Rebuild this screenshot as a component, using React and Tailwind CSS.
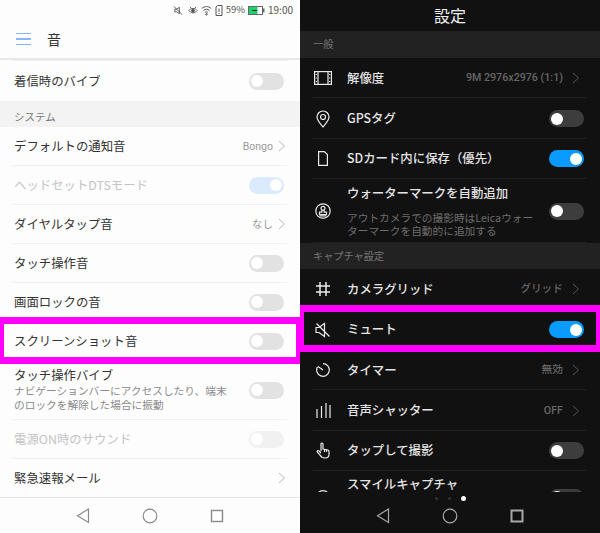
import React from "react";

const jp = { fontFamily: '"Noto Sans CJK JP", "Noto Sans", sans-serif' };

const Toggle = ({ on, dark, faded }) => {
  let track = dark ? "bg-[#3d3d3d]" : "bg-[#e2e2e2]";
  if (on) track = "bg-[#0a9bff]";
  if (faded) track = on ? "bg-[#dbeafd]" : "bg-[#f1f1f1]";
  return (
    <div
      className={`w-[35px] h-[17px] rounded-full flex items-center px-[1px] shrink-0 ${track} ${
        on ? "justify-end" : "justify-start"
      }`}
    >
      <div className="w-[12px] h-[12px] mx-[1px] rounded-full bg-white" />
    </div>
  );
};

const Chevron = ({ color, className }) => (
  <svg width="8" height="12" viewBox="0 0 8 12" className={`shrink-0 ${className}`}>
    <path d="M1 1l5.5 5L1 11" fill="none" stroke={color} strokeWidth="1" />
  </svg>
);

const LeftRow = ({ title, sub, value, chevron, toggle, on, faded, h = "h-[39px]" }) => (
  <div className={`${h} mx-[13px] flex items-center border-b border-[#f0f0f0]`}>
    <div className="flex-1 min-w-0 pl-[1px]">
      <div className={`text-[12.4px] leading-[15px] ${faded ? "text-[#c4c4c4]" : "text-[#333]"}`}>{title}</div>
      {sub && <div className="text-[10.7px] leading-[14px] mt-[1px] text-[#8a8a8a] w-[222px]">{sub}</div>}
    </div>
    {value && <span className="pt-[1px] text-[10.5px] text-[#999] font-['Roboto','Noto_Sans_CJK_JP',sans-serif]">{value}</span>}
    {chevron && <Chevron color="#bbb" className="ml-[5px] mr-[1px]" />}
    {toggle && (
      <div className="mr-[3px]">
        <Toggle on={on} faded={faded} />
      </div>
    )}
  </div>
);

const RightRow = ({ icon, title, sub, value, toggle, on, h = "h-[40.4px]" }) => (
  <div className={`${h} mx-[13px] pt-[1px] flex items-center border-b border-[#202020]`}>
    <div className="w-[20px] flex justify-center shrink-0">{icon}</div>
    <div className="flex-1 min-w-0 pl-[14px]">
      <div className="text-[12.4px] leading-[15px] font-medium text-[#e4e4e4]">{title}</div>
      {sub && <div className="text-[10.7px] leading-[13px] mt-[10px] text-[#6e6e6e] w-[190px]">{sub}</div>}
    </div>
    {value && <span className="text-[10.7px] font-medium text-[#666] font-['Roboto','Noto_Sans_CJK_JP',sans-serif]">{value}</span>}
    {value && <Chevron color="#555" className="ml-[9px] mr-[7px]" />}
    {toggle && (
      <div className="mr-[3px]">
        <Toggle on={on} dark />
      </div>
    )}
  </div>
);

const NavBar = ({ color, squareWidth = 1.4 }) => (
  <div className="flex items-center justify-center gap-[47px] h-[35px] shrink-0">
    <svg width="20" height="20" viewBox="0 0 20 20">
      <path d="M15.500 3v13.500L4.500 9.750z" fill="none" stroke={color} strokeWidth="1.2" />
    </svg>
    <svg width="20" height="20" viewBox="0 0 20 20">
      <circle cx="10" cy="10" r="6.800" fill="none" stroke={color} strokeWidth="1.2" />
    </svg>
    <svg width="20" height="20" viewBox="0 0 20 20">
      <rect x="4.500" y="4.500" width="11" height="11" fill="none" stroke={color} strokeWidth={squareWidth} />
    </svg>
  </div>
);

const StatusBar = () => (
  <div className="h-[20px] flex items-center justify-end gap-[3px] pr-[7px] text-[9.5px] text-[#555]" style={jp}>
    <svg width="10" height="11" viewBox="0 0 11 11" fill="none" stroke="#555" strokeWidth="1" className="mr-[2px]">
      <path d="M1 1l9 9M2 4h2l3-2v7L4 7H2z" />
    </svg>
    <svg width="10" height="11" viewBox="0 0 11 11" fill="none" stroke="#555" strokeWidth="1">
      <path d="M1 5.500C3 2.500 8 2.500 10 5.500 8 9 3 9 1 5.500z" />
      <circle cx="5.500" cy="5.700" r="1.600" fill="#555" />
      <path d="M2 1.500l1.500 1.500M9 1.500L7.500 3" />
    </svg>
    <svg width="11" height="11" viewBox="0 0 11 11" fill="none" stroke="#555" strokeWidth="1">
      <path d="M.8 3.500c3-2.600 6.400-2.600 9.400 0M2.500 5.500c2-1.700 4-1.700 6 0M4 7.500c1-.8 2-.8 3 0" />
      <circle cx="5.500" cy="9.300" r=".7" fill="#555" />
    </svg>
    <svg width="8" height="11" viewBox="0 0 8 11" fill="none" stroke="#555" strokeWidth="1">
      <path d="M2.500 .5h4.500v10H1v-8.500z" />
      <path d="M4 3.500v3.500M4 8v1" />
    </svg>
    <span className="leading-none">59%</span>
    <svg width="17" height="9" viewBox="0 0 17 9">
      <rect x=".5" y=".5" width="14" height="8" fill="#fff" stroke="#666" />
      <rect x="1" y="1" width="8.500" height="7" fill="#19d36b" />
      <path d="M4 4.500h5" stroke="#222" strokeWidth="1" />
      <rect x="15" y="2.500" width="1.500" height="4" fill="#666" />
    </svg>
    <span className="leading-none text-[10px]">19:00</span>
  </div>
);

const iconProps = { fill: "none", stroke: "#ececec", strokeWidth: 1.2 };

const icons = {
  film: (
    <svg width="18" height="14" viewBox="0 0 18 14" {...iconProps}>
      <rect x=".6" y=".6" width="16.800" height="12.800" />
      <path d="M4 1v12M14 1v12" />
      <path d="M2.300 3v1M2.300 6.500v1M2.300 10v1M15.700 3v1M15.700 6.500v1M15.700 10v1" />
    </svg>
  ),
  pin: (
    <svg width="14" height="18" viewBox="0 0 14 18" {...iconProps}>
      <path d="M7 17C4 13 1 10.500 1 7a6 6 0 0 1 12 0c0 3.500-3 6-6 10z" />
      <circle cx="7" cy="7" r="2.500" />
    </svg>
  ),
  sd: (
    <svg width="10" height="15" viewBox="0 0 10 15" {...iconProps}>
      <path d="M.6.6h5.800l3 3v10.800H.6z" />
    </svg>
  ),
  stamp: (
    <svg width="16" height="16" viewBox="0 0 16 16" {...iconProps}>
      <circle cx="8" cy="8" r="7.200" />
      <circle cx="8" cy="5.300" r="2" />
      <path d="M6.800 7.200v2H4.500v2.300h7V9.200H9.200v-2M4.500 12.800h7" />
    </svg>
  ),
  grid: (
    <svg width="16" height="16" viewBox="0 0 16 16" {...iconProps} strokeWidth="1.500">
      <path d="M5 1v14M11 1v14M1 5h14M1 11h14" />
    </svg>
  ),
  mute: (
    <svg width="16" height="16" viewBox="0 0 16 16" {...iconProps}>
      <path d="M1 5.500h3L9.500 1.500v13L4 10.500H1zM1.500 1.500l13 13" />
    </svg>
  ),
  timer: (
    <svg width="14" height="14" viewBox="0 0 14 14" {...iconProps}>
      <path d="M7 .7a6.300 6.300 0 1 1-5.500 3.200M2 3.500L7 7" />
    </svg>
  ),
  bars: (
    <svg width="15" height="15" viewBox="0 0 15 15" {...iconProps}>
      <path d="M1 6v9M5.500 3v12M10 0v15M14 2v13" />
    </svg>
  ),
  hand: (
    <svg width="14" height="17" viewBox="0 0 14 17" {...iconProps}>
      <path d="M5 9V2a1 1 0 0 1 2 0v5l5 1c1 .3 1 1 1 2v2.500c0 2-1.500 3.500-4 3.500-3 0-4-1-5-3L1.200 10c-.5-1 .8-2 1.800-1l2 2" />
      <path d="M8.500 7v3M10.500 7.500V10" />
    </svg>
  ),
  smile: (
    <svg width="14" height="14" viewBox="0 0 14 14" {...iconProps}>
      <circle cx="7" cy="7" r="6.400" />
    </svg>
  ),
};

export default function App() {
  return (
    <div className="relative w-[600px] h-[533px] flex overflow-hidden" style={jp}>
      {/* LEFT: sound settings */}
      <div className="w-[300px] h-full bg-[#fdfdfd] flex flex-col">
        <StatusBar />
        <div className="h-[38px] flex items-center pl-[16px] gap-[16px] border-b-2 border-[#e8e8e8] shrink-0 box-content">
          <div className="w-[15px] flex flex-col gap-[4px]">
            <div className="h-[1.500px] bg-[#8ab4fb]" />
            <div className="h-[1.500px] bg-[#8ab4fb]" />
            <div className="h-[1.500px] bg-[#8ab4fb]" />
          </div>
          <span className="text-[14px] text-[#333]">音</span>
        </div>

        <div className="flex-1 min-h-0 overflow-hidden">
          <div className="mx-[13px] h-[1px] bg-[#f0f0f0]" />
          <div className="h-[40px] mx-[13px] flex items-center">
            <div className="flex-1 pl-[1px] text-[12.4px] text-[#333]">着信時のバイブ</div>
            <div className="mr-[3px]">
              <Toggle />
            </div>
          </div>
          <div className="h-[26px] bg-[#f3f3f3] pl-[14px] pt-[8px] text-[10.500px] leading-[16px] text-[#777]">システム</div>
          <LeftRow title="デフォルトの通知音" value="Bongo" chevron />
          <LeftRow title="ヘッドセットDTSモード" toggle on faded />
          <LeftRow title="ダイヤルタップ音" value="なし" chevron />
          <LeftRow title="タッチ操作音" toggle />
          <LeftRow title="画面ロックの音" toggle />
          <LeftRow title="スクリーンショット音" toggle />
          <LeftRow
            title="タッチ操作バイブ"
            sub="ナビゲーションバーにアクセスしたり、端末のロックを解除した場合に振動"
            toggle
            h="h-[59px]"
          />
          <LeftRow title="電源ON時のサウンド" toggle faded />
          <LeftRow title="緊急速報メール" chevron />
        </div>

        <div className="border-t border-[#e6e6e6] shrink-0">
          <NavBar color="#8a8a8a" />
        </div>
      </div>

      {/* RIGHT: camera settings */}
      <div className="w-[300px] h-full bg-[#111111] flex flex-col">
        <div className="h-[31px] pb-[2px] flex items-center justify-center text-[16px] text-[#eee] shrink-0">設定</div>
        <div className="flex-1 min-h-0 overflow-hidden">
          <div className="h-[27px] pb-[2px] bg-[#222222] pl-[13px] flex items-center text-[10.2px] text-[#777]">一般</div>
          <RightRow icon={icons.film} title="解像度" value="9M 2976x2976 (1:1)" />
          <RightRow icon={icons.pin} title="GPSタグ" toggle />
          <RightRow icon={icons.sd} title="SDカード内に保存（優先）" toggle on />
          <RightRow
            icon={icons.stamp}
            title="ウォーターマークを自動追加"
            sub="アウトカメラでの撮影時はLeicaウォーターマークを自動的に追加する"
            toggle
            h="h-[64px]"
          />
          <div className="h-[26px] pb-[2px] bg-[#222222] pl-[13px] flex items-center text-[10.2px] text-[#777]">キャプチャ設定</div>
          <RightRow icon={icons.grid} title="カメラグリッド" value="グリッド" />
          <RightRow icon={icons.mute} title="ミュート" toggle on />
          <RightRow icon={icons.timer} title="タイマー" value="無効" />
          <RightRow icon={icons.bars} title="音声シャッター" value="OFF" />
          <RightRow icon={icons.hand} title="タップして撮影" toggle />
          <div className="h-[21px] overflow-hidden">
            {/* row continues below the fold, only its title and the tops of icon/toggle show */}
            <div className="h-[52px] mx-[13px] flex items-center">
              <div className="w-[20px] flex justify-center shrink-0">{icons.smile}</div>
              <div className="flex-1 pl-[14px] -mt-[26px] text-[12.4px] leading-[15px] font-medium text-[#e4e4e4]">スマイルキャプチャ</div>
              <div className="mr-[3px]">
                <Toggle dark />
              </div>
            </div>
          </div>
        </div>
        <div className="relative h-[41px] shrink-0 flex flex-col justify-end">
          <div className="absolute top-[3px] left-0 right-0 h-[6px] flex items-center justify-center gap-[10px]">
            <div className="w-[3px] h-[3px] rounded-full bg-[#333]" />
            <div className="w-[3px] h-[3px] rounded-full bg-[#333]" />
            <div className="w-[5px] h-[5px] rounded-full bg-white" />
          </div>
          <NavBar color="#a8a8a8" squareWidth={2} />
        </div>
      </div>

      {/* magenta highlight boxes drawn over the screenshots */}
      <div className="absolute left-0 top-[317px] w-[300px] h-[47px] border-x-4 border-y-[7px] border-[#ff00ff]" />
      <div className="absolute left-[300px] top-[305px] w-[300px] h-[47px] border-x-4 border-y-[7px] border-[#ff00ff]" />
    </div>
  );
}
